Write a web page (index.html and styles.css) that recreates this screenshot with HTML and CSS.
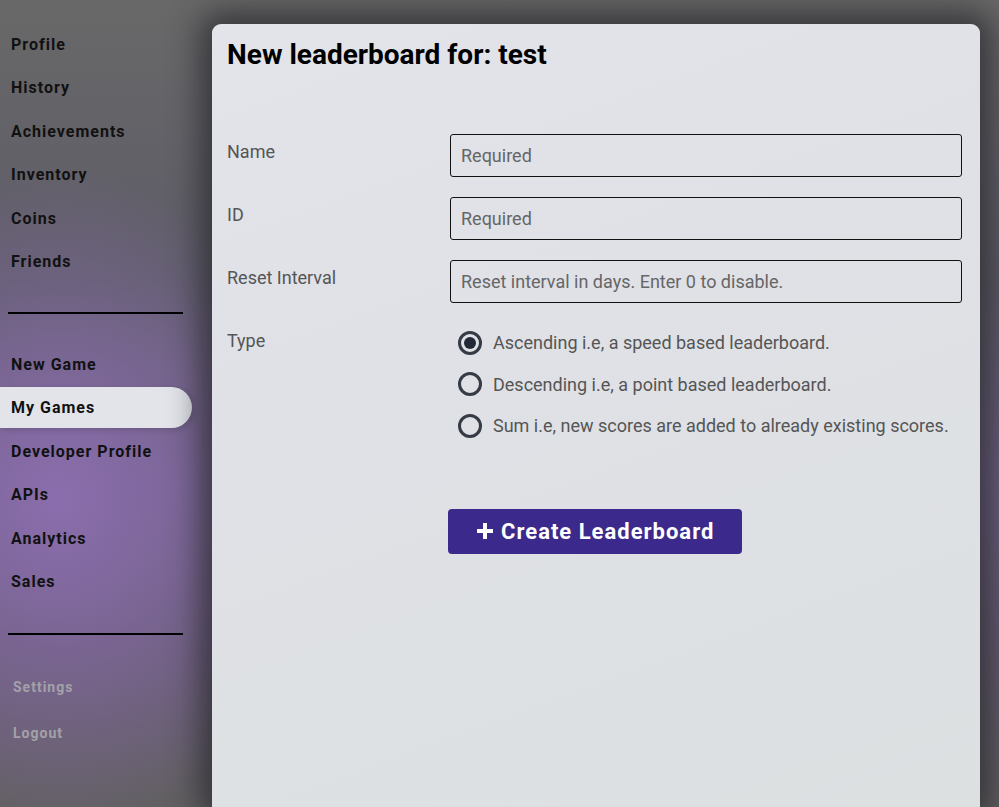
FILE: index.html
```html
<!DOCTYPE html>
<html lang="en">
<head>
    <meta charset="UTF-8">
    <meta name="viewport" content="width=device-width, initial-scale=1.0">
    <title>New leaderboard</title>
    <link rel="stylesheet" href="styles.css">
</head>
<body>
    <div class="layout">
        <nav class="sidebar">
            <ul class="nav-group">
                <li>Profile</li>
                <li>History</li>
                <li>Achievements</li>
                <li>Inventory</li>
                <li>Coins</li>
                <li>Friends</li>
            </ul>
            <hr class="divider">
            <ul class="nav-group">
                <li>New Game</li>
                <li class="active">My Games</li>
                <li>Developer Profile</li>
                <li>APIs</li>
                <li>Analytics</li>
                <li>Sales</li>
            </ul>
            <hr class="divider bottom">
            <ul class="nav-group muted">
                <li>Settings</li>
                <li>Logout</li>
            </ul>
        </nav>

        <main class="panel">
            <h1>New leaderboard for: test</h1>
            <form class="form">
                <div class="row">
                    <label>Name</label>
                    <input type="text" placeholder="Required">
                </div>
                <div class="row">
                    <label>ID</label>
                    <input type="text" placeholder="Required">
                </div>
                <div class="row">
                    <label>Reset Interval</label>
                    <input type="text" placeholder="Reset interval in days. Enter 0 to disable.">
                </div>
                <div class="row">
                    <label>Type</label>
                    <div class="options">
                        <label class="option"><span class="radio checked"></span>Ascending i.e, a speed based leaderboard.</label>
                        <label class="option"><span class="radio"></span>Descending i.e, a point based leaderboard.</label>
                        <label class="option"><span class="radio"></span>Sum i.e, new scores are added to already existing scores.</label>
                    </div>
                </div>
                <div class="actions">
                    <button type="button" class="create-button">
                        <svg width="18" height="18" viewBox="0 0 18 18"><path d="M7 1h4v6h6v4h-6v6H7v-6H1V7h6z" fill="#fff"/></svg>
                        Create Leaderboard
                    </button>
                </div>
            </form>
        </main>
    </div>
</body>
</html>
```

FILE: styles.css
```css
body {
    margin: 0;
    padding: 0;
    height: 807px;
    overflow: hidden;
    font-family: Roboto, "Liberation Sans", sans-serif;
    background:
        radial-gradient(ellipse 260px 330px at 60px 500px, rgba(140, 110, 175, 0.95), rgba(140, 110, 175, 0) 100%),
        linear-gradient(180deg, #686868 0%, #5e5c68 35%, #6e5f84 60%, #665b72 80%, #626062 100%);
}
.layout {
    display: flex;
    height: 100%;
}
.sidebar {
    width: 212px;
    flex-shrink: 0;
    padding-top: 24px;
}
.nav-group {
    list-style: none;
    margin: 0;
    padding: 0;
}
.nav-group li {
    height: 41px;
    margin-bottom: 2.4px;
    padding-left: 11px;
    display: flex;
    align-items: center;
    font-size: 16px;
    font-weight: 700;
    letter-spacing: 1px;
    color: #111;
    width: 181px;
}
.nav-group li.active {
    background: #e3e4ea;
    border-radius: 0 21px 21px 0;
    box-shadow: 2px 2px 6px rgba(0, 0, 0, 0.15);
}
.nav-group.muted li {
    font-size: 14px;
    color: #a3a1a8;
    padding-left: 13px;
    height: 44px;
    margin-bottom: 2px;
}
.divider {
    margin: 30px 0 30px 8px;
    width: 175px;
    border: none;
    border-top: 2px solid #000;
}
.divider.bottom {
    margin-top: 31px;
}
.panel {
    margin: 24px 19px 0 0;
    flex: 1;
    background: linear-gradient(160deg, #e3e4ea 0%, #dfe1e6 40%, #dde0e1 100%);
    border-radius: 9px 9px 0 0;
    padding: 15px 18px 0 15px;
    box-shadow: 0 0 30px 12px rgba(40, 40, 44, 0.75);
}
.panel h1 {
    margin: 0;
    font-size: 28px;
    font-weight: 700;
    color: #000;
    line-height: 32px;
}
.form {
    margin-top: 63px;
}
.row {
    display: flex;
    align-items: flex-start;
    margin-bottom: 20px;
}
.row > label {
    width: 223px;
    flex-shrink: 0;
    font-size: 18px;
    color: #555;
    line-height: 20px;
    padding-top: 8px;
}
.row input {
    flex: 1;
    height: 43px;
    box-sizing: border-box;
    border: 1px solid #111;
    border-radius: 3px;
    background: transparent;
    padding: 0 10px;
    font-family: Roboto, "Liberation Sans", sans-serif;
    font-size: 18px;
    color: #222;
}
.row input::placeholder {
    color: #666;
}
.options {
    display: flex;
    flex-direction: column;
    padding-left: 8px;
    margin-top: -1px;
}
.option {
    display: flex;
    align-items: center;
    height: 41.5px;
    font-size: 18px;
    color: #555;
}
.radio {
    width: 24px;
    height: 24px;
    box-sizing: border-box;
    border: 3px solid #353a45;
    border-radius: 50%;
    margin-right: 11px;
    position: relative;
}
.radio.checked::after {
    content: '';
    position: absolute;
    top: 3px;
    left: 3px;
    width: 12px;
    height: 12px;
    border-radius: 50%;
    background: #232836;
}
.actions {
    padding-left: 221px;
    margin-top: 62px;
}
.create-button {
    display: flex;
    align-items: center;
    gap: 7px;
    height: 45px;
    padding: 0 28px;
    background: #3b2a8c;
    color: #fff;
    border: none;
    border-radius: 4px;
    font-family: Roboto, "Liberation Sans", sans-serif;
    font-size: 22px;
    font-weight: 700;
    letter-spacing: 1px;
}
```
